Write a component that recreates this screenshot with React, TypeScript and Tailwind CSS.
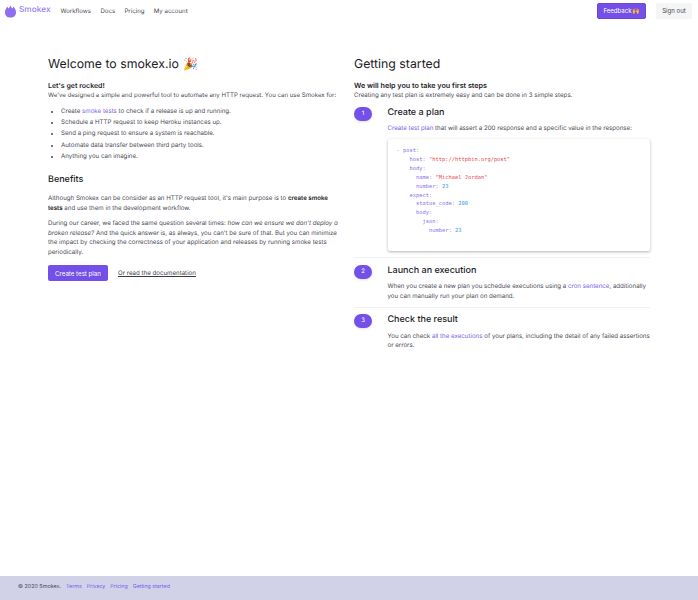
import React from 'react'

const Link = ({ children }: { children: React.ReactNode }) => (
  <a className="text-[#7c5ce8]">{children}</a>
)

const Logo = () => (
  <svg width="11" height="13" viewBox="0 0 11 13">
    <path
      d="M5.5 0.5 C6 2 7 3 7.4 3.6 C8 3.2 8.3 2.4 8.4 1.6 C10 3.4 11 5.2 11 7.4 C11 10.6 8.6 12.6 5.5 12.6 C2.4 12.6 0 10.6 0 7.4 C0 5.2 1 3.4 2.6 1.6 C2.7 2.4 3 3.2 3.6 3.6 C4.2 2.8 5 1.8 5.5 0.5 Z"
      fill="#8d6ff0"
    />
  </svg>
)

const Step = ({ n, title, last, children }: { n: number; title: string; last?: boolean; children: React.ReactNode }) => (
  <div className={last ? 'flex' : 'flex border-b border-[#f1f1f4]'}>
    <div className="w-[33.5px] shrink-0">
      <div className="w-[18px] h-[14px] rounded-full bg-[#7450e8] text-white text-[6px] flex items-center justify-center shadow-sm">
        {n}
      </div>
    </div>
    <div className="flex-1 min-w-0">
      <h3 className="text-[9px] leading-[12px] font-medium text-[#1c1c28]">{title}</h3>
      {children}
    </div>
  </div>
)

const App = () => {
  return (
    <div className="min-h-[600px] flex flex-col bg-white text-[6.15px] leading-[9.5px] text-[#4a4a55] font-['Inter',sans-serif] antialiased [text-rendering:geometricPrecision]">
      {/* navbar */}
      <nav className="h-[22px] flex items-center pl-[5px] pr-[6px]">
        <Logo />
        <span className="ml-[3px] text-[8.3px] font-medium text-[#9a7ff2]">Smokex</span>
        <div className="ml-[10px] flex gap-[9.3px] text-[6.1px] pt-[1px]">
          <a>Workflows</a>
          <a>Docs</a>
          <a>Pricing</a>
          <a>My account</a>
        </div>
        <div className="ml-auto flex items-center gap-[10px]">
          <button className="h-[16px] w-[49px] rounded-[2px] bg-[#7450e8] border border-[#6a45e0] text-white text-[6.1px]">Feedback🙌</button>
          <button className="h-[16px] w-[36px] rounded-[2px] bg-[#f5f5f5] text-[#4a4a55] text-[6.1px]">Sign out</button>
        </div>
      </nav>

      <main className="flex-1 pt-[35px] pl-[48px] pr-[48px] grid grid-cols-[292px_296px] gap-x-[14px]">
        {/* left column */}
        <section>
          <h1 className="text-[12.3px] leading-[14px] font-normal text-[#1c1c28] flex items-center">
            Welcome to smokex.io <span className="ml-[5px] text-[12px]">🎉</span>
          </h1>
          <p className="mt-[10px] font-semibold text-[7px] text-[#1c1c28]">Let's get rocked!</p>
          <p className="text-[6.1px]">We've designed a simple and powerful tool to automate any HTTP request. You can use Smokex for:</p>
          <ul className="mt-[7px] pl-[13px] list-disc flex flex-col gap-[1.7px]">
            <li>Create <Link>smoke tests</Link> to check if a release is up and running.</li>
            <li>Schedule a HTTP request to keep Heroku instances up.</li>
            <li>Send a ping request to ensure a system is reachable.</li>
            <li>Automate data transfer between third party tools.</li>
            <li>Anything you can imagine.</li>
          </ul>
          <h2 className="mt-[13px] text-[9px] leading-[12px] font-medium text-[#1c1c28]">Benefits</h2>
          <p className="mt-[8px]">
            Although Smokex can be consider as an HTTP request tool, it's main purpose is to <b className="font-semibold text-[#1c1c28]">create smoke tests</b> and use them in the development workflow.
          </p>
          <p className="mt-[6px]">
            During our career, we faced the same question several times: <i>how can we ensure we don't deploy a broken release?</i> And the quick answer is, as always, you can't be sure of that. But you can minimize the impact by checking the correctness of your application and releases by running smoke tests periodically.
          </p>
          <div className="mt-[8px] flex items-center gap-[10px]">
            <button className="h-[16px] w-[60px] rounded-[2px] bg-[#7450e8] text-white text-[6.15px]">Create test plan</button>
            <a className="underline text-[#3a3a45]">Or read the documentation</a>
          </div>
        </section>

        {/* right column */}
        <section>
          <h1 className="text-[12.3px] leading-[14px] font-normal text-[#1c1c28]">Getting started</h1>
          <p className="mt-[10px] font-semibold text-[7.2px] text-[#1c1c28]">We will help you to take you first steps</p>
          <p>Creating any test plan is extremely easy and can be done in 3 simple steps.</p>

          <div className="mt-[7px] flex flex-col gap-[6.5px]">
            <Step n={1} title="Create a plan">
              <p className="mt-[4.5px]"><Link>Create test plan</Link> that will assert a 200 response and a specific value in the response:</p>
              <pre className="mt-[6px] mb-[6px] h-[112px] rounded-[2px] bg-white shadow-[0_1px_3px_rgba(0,0,0,0.3)] pt-[8px] pl-[9px] font-['DejaVu_Sans_Mono',monospace] text-[5.4px] leading-[8.9px] text-[#8d6ff0]">
                <span className="text-[#9a9aa5]">- </span>post<span className="text-[#9a9aa5]">:</span>{'\n'}
                {'    '}host<span className="text-[#9a9aa5]">: </span><span className="text-[#e5484d]">"http://httpbin.org/post"</span>{'\n'}
                {'    '}body<span className="text-[#9a9aa5]">:</span>{'\n'}
                {'      '}name<span className="text-[#9a9aa5]">: </span><span className="text-[#e5484d]">"Michael Jordan"</span>{'\n'}
                {'      '}number<span className="text-[#9a9aa5]">: </span><span className="text-[#2f9be8]">23</span>{'\n'}
                {'    '}expect<span className="text-[#9a9aa5]">:</span>{'\n'}
                {'      '}status_code<span className="text-[#9a9aa5]">: </span><span className="text-[#2f9be8]">200</span>{'\n'}
                {'      '}body<span className="text-[#9a9aa5]">:</span>{'\n'}
                {'        '}json<span className="text-[#9a9aa5]">:</span>{'\n'}
                {'          '}number<span className="text-[#9a9aa5]">: </span><span className="text-[#2f9be8]">23</span>
              </pre>
            </Step>
            <Step n={2} title="Launch an execution">
              <p className="mt-[5.5px] mb-[5.5px]">When you create a new plan you schedule executions using a <Link>cron sentence</Link>, additionally you can manually run your plan on demand.</p>
            </Step>
            <Step n={3} title="Check the result" last>
              <p className="mt-[5.5px]">You can check <Link>all the executions</Link> of your plans, including the detail of any failed assertions or errors.</p>
            </Step>
          </div>
        </section>
      </main>

      <footer className="h-[24px] bg-[#d1d1e8] pl-[18px] flex items-center gap-[5px] text-[5.3px]">
        <span className="text-[5.4px]">© 2020 Smokex.</span>
        <Link>Terms</Link>
        <Link>Privacy</Link>
        <Link>Pricing</Link>
        <Link>Getting started</Link>
      </footer>
    </div>
  )
}

export default App
